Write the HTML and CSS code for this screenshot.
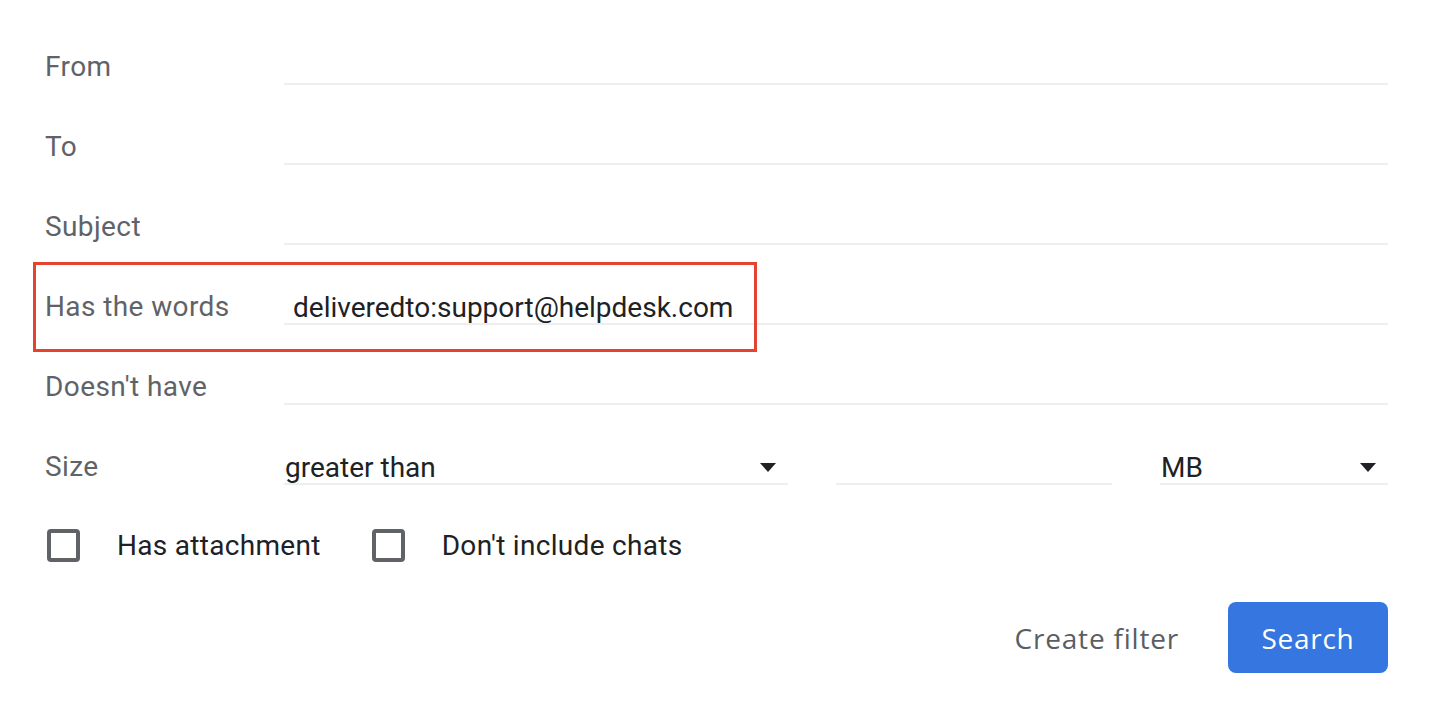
FILE: index.html
```html
<!DOCTYPE html>
<html lang="en">

<head>
    <meta charset="UTF-8">
    <meta name="viewport" content="width=device-width, initial-scale=1.0">
    <title>Search filter</title>
    <link rel="stylesheet" href="styles.css">
</head>

<body>
    <div class="filter">
        <div class="row">
            <label class="label">From</label>
            <input class="field" type="text">
        </div>
        <div class="row">
            <label class="label">To</label>
            <input class="field" type="text">
        </div>
        <div class="row">
            <label class="label">Subject</label>
            <input class="field" type="text">
        </div>
        <div class="row marked">
            <label class="label">Has the words</label>
            <input class="field" type="text" value="deliveredto:support@helpdesk.com">
            <div class="highlight"></div>
        </div>
        <div class="row">
            <label class="label">Doesn't have</label>
            <input class="field" type="text">
        </div>
        <div class="row">
            <label class="label">Size</label>
            <div class="size">
                <div class="select op">
                    <span>greater than</span>
                    <i class="caret"></i>
                </div>
                <input class="field num" type="text">
                <div class="select unit">
                    <span>MB</span>
                    <i class="caret"></i>
                </div>
            </div>
        </div>

        <div class="checks">
            <label class="check"><span class="box"></span>Has attachment</label>
            <label class="check"><span class="box"></span>Don't include chats</label>
        </div>

        <div class="actions">
            <button class="btn link">Create filter</button>
            <button class="btn primary">Search</button>
        </div>
    </div>
</body>

</html>
```

FILE: styles.css
```css
body {
    margin: 0;
    background: #fff;
    font-family: Roboto, "Liberation Sans", sans-serif;
    font-size: 28px;
    color: #202124;
}

.filter {
    padding: 5px 42px 0 45px;
}

.row {
    display: flex;
    align-items: flex-end;
    height: 80px;
}

.row.marked {
    position: relative;
}

.label {
    flex: 0 0 239px;
    line-height: 32px;
    height: 32px;
    border-bottom: 2px solid transparent;
    color: #5f6368;
    letter-spacing: 0.4px;
}

.field {
    flex: 1;
    min-width: 0;
    height: 32px;
    margin: 0;
    padding: 0 0 0 9px;
    border: 0;
    border-bottom: 2px solid #eeeeee;
    font: inherit;
    color: #202124;
    outline: none;
    background: transparent;
}

.highlight {
    position: absolute;
    left: -12px;
    top: 17px;
    width: 724px;
    height: 90px;
    box-sizing: border-box;
    border: 3px solid #e5432f;
    pointer-events: none;
}

.size {
    flex: 1;
    display: flex;
    gap: 48px;
}

.select {
    display: flex;
    align-items: center;
    justify-content: space-between;
    height: 32px;
    padding: 0 12px 0 1px;
    border-bottom: 2px solid #eeeeee;
}

.select.op {
    width: 491px;
}

.select.unit {
    width: 215px;
}

.field.num {
    flex: 0 0 267px;
}

.caret {
    width: 0;
    height: 0;
    border-left: 8px solid transparent;
    border-right: 8px solid transparent;
    border-top: 9px solid #202124;
}

.checks {
    display: flex;
    align-items: center;
    height: 33px;
    margin-top: 44px;
    margin-left: 2px;
}

.check {
    display: flex;
    align-items: center;
    margin-right: 51px;
    line-height: 33px;
    letter-spacing: 0.3px;
}

.box {
    width: 25px;
    height: 25px;
    border: 4px solid #5f6368;
    border-radius: 4px;
    margin-right: 37px;
}

.actions {
    display: flex;
    justify-content: flex-end;
    gap: 25px;
    margin-top: 40px;
}

.btn {
    height: 71px;
    border: 0;
    border-radius: 8px;
    font-family: "Open Sans", Roboto, sans-serif;
    font-size: 28px;
    font-weight: 500;
    cursor: pointer;
}

.btn.link {
    padding: 0 24px;
    background: transparent;
    color: #5a5e63;
    letter-spacing: 0.8px;
}

.btn.primary {
    width: 160px;
    background: #3576e0;
    color: #fff;
    letter-spacing: 0.7px;
}
```
